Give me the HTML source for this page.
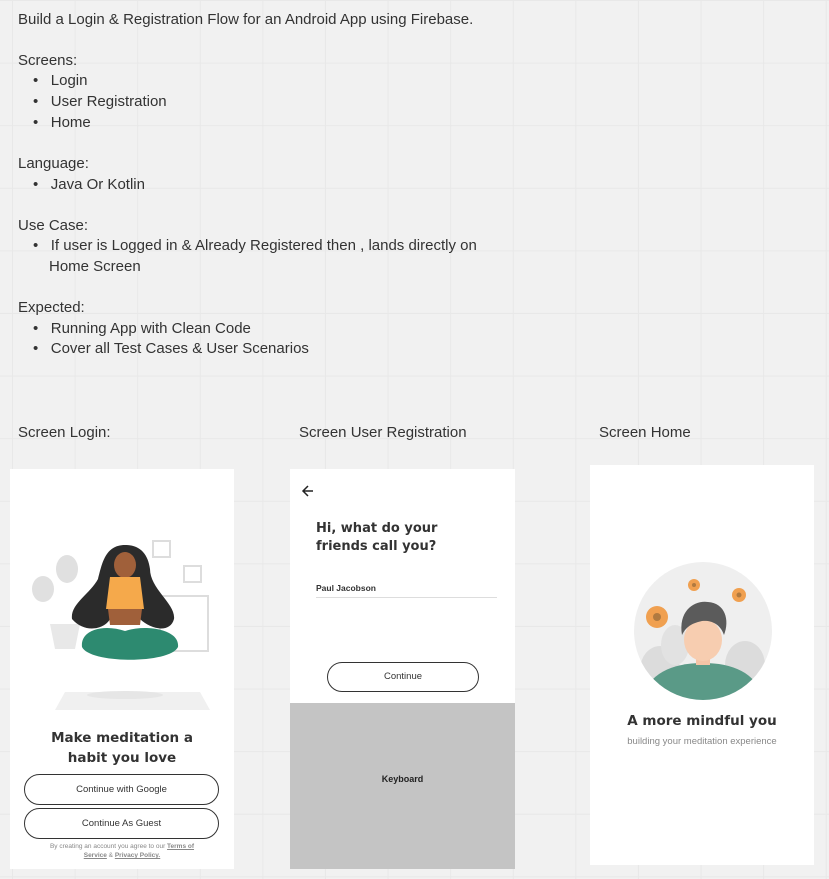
<!DOCTYPE html>
<html><head><meta charset="utf-8"><style>
*{margin:0;padding:0;box-sizing:border-box}
body{width:829px;height:879px;overflow:hidden;position:relative;font-family:"Liberation Sans",sans-serif;color:#333;
background-color:#f1f1f1;
background-image:linear-gradient(to right,#e8e8e8 1px,transparent 1px),linear-gradient(to bottom,#e8e8e8 1px,transparent 1px);
background-size:62.6px 62.6px;background-position:12px 0px;}
.t{position:absolute;font-size:15px;color:#333;white-space:nowrap;line-height:18px}
.card{position:absolute;background:#fff}
.btn{position:absolute;border:1px solid #333;border-radius:16px;font-size:9.5px;text-align:center;background:#fff;color:#333}
.h{position:absolute;font-weight:bold;color:#333;text-align:center}
</style></head><body>
<div class="t" style="left:18px;top:11px">Build a Login &amp; Registration Flow for an Android App using Firebase.</div>
<div class="t" style="left:18px;top:52px">Screens:</div>
<div class="t" style="left:33px;top:72px">•&nbsp;&nbsp;&nbsp;Login</div>
<div class="t" style="left:33px;top:93px">•&nbsp;&nbsp;&nbsp;User Registration</div>
<div class="t" style="left:33px;top:114px">•&nbsp;&nbsp;&nbsp;Home</div>
<div class="t" style="left:18px;top:155px">Language:</div>
<div class="t" style="left:33px;top:176px">•&nbsp;&nbsp;&nbsp;Java Or Kotlin</div>
<div class="t" style="left:18px;top:217px">Use Case:</div>
<div class="t" style="left:33px;top:237px">•&nbsp;&nbsp;&nbsp;If user is Logged in &amp; Already Registered then , lands directly on</div>
<div class="t" style="left:49px;top:258px">Home Screen</div>
<div class="t" style="left:18px;top:299px">Expected:</div>
<div class="t" style="left:33px;top:320px">•&nbsp;&nbsp;&nbsp;Running App with Clean Code</div>
<div class="t" style="left:33px;top:340px">•&nbsp;&nbsp;&nbsp;Cover all Test Cases &amp; User Scenarios</div>
<div class="t" style="left:18px;top:424px">Screen Login:</div>
<div class="t" style="left:299px;top:424px">Screen User Registration</div>
<div class="t" style="left:599px;top:424px">Screen Home</div>

<div class="card" style="left:10px;top:469px;width:224px;height:400px">
<svg width="224" height="260" style="position:absolute;left:0;top:0">
 <g fill="#e0e0e0">
  <ellipse cx="33" cy="120" rx="11" ry="13"/><ellipse cx="57" cy="100" rx="11" ry="14"/>
  <rect x="143" y="72" width="17" height="16" fill="none" stroke="#ddd" stroke-width="2"/>
  <rect x="174" y="97" width="17" height="16" fill="none" stroke="#ddd" stroke-width="2"/>
  <rect x="150" y="127" width="48" height="55" fill="none" stroke="#ddd" stroke-width="2"/>
  <path d="M40 155 h30 l-5 25 h-20z" fill="#e8e8e8"/>
  <path d="M45 241 L55 223 H190 L200 241Z" fill="#f0f0f0"/>
  <ellipse cx="115" cy="226" rx="38" ry="4" fill="#e6e6e6"/>
 </g>
 <path d="M115 76 C95 76 92 95 88 110 C80 125 60 135 62 150 C75 165 95 160 100 150 L130 150 C140 160 160 165 164 150 C166 135 140 120 140 100 C138 85 130 76 115 76Z" fill="#2b2b2b"/>
 <ellipse cx="115" cy="96" rx="11" ry="13" fill="#a0603a"/>
 <path d="M100 108 H130 L134 140 H96Z" fill="#f5a94b"/>
 <path d="M98 140 H132 L130 156 H100Z" fill="#a0603a"/>
 <path d="M72 178 C70 160 95 155 115 162 C135 155 170 160 168 178 C160 195 80 195 72 178Z" fill="#2d8a70"/>
</svg>
<div class="h" style="left:0;width:224px;top:259px;font-size:13.5px;line-height:20px;font-family:'DejaVu Sans',sans-serif">Make meditation a<br>habit you love</div>
<div class="btn" style="left:14px;top:305px;width:195px;height:31px;line-height:29px">Continue with Google</div>
<div class="btn" style="left:14px;top:339px;width:195px;height:31px;line-height:29px">Continue As Guest</div>
<div style="position:absolute;left:0;width:224px;top:373px;font-size:6.5px;line-height:9px;text-align:center;color:#888">By creating an account you agree to our <u><b>Terms of</b></u><br><u><b>Service</b></u> &amp; <u><b>Privacy Policy.</b></u></div>
</div>

<div class="card" style="left:290px;top:469px;width:225px;height:400px">
<svg width="20" height="20" style="position:absolute;left:9px;top:12px"><path d="M14 10H4M9 5L4 10L9 15" stroke="#222" stroke-width="1.5" fill="none"/></svg>
<div class="h" style="left:26px;top:51px;font-size:13px;line-height:18px;text-align:left;font-family:'DejaVu Sans',sans-serif">Hi, what do your<br>friends call you?</div>
<div style="position:absolute;left:26px;top:114px;font-size:8.5px;font-weight:bold;color:#333">Paul Jacobson</div>
<div style="position:absolute;left:26px;top:128px;width:181px;height:1px;background:#ddd"></div>
<div class="btn" style="left:37px;top:193px;width:152px;height:30px;line-height:28px">Continue</div>
<div style="position:absolute;left:0;top:234px;width:225px;height:166px;background:#c4c4c4;text-align:center;line-height:152px;font-size:9px;font-weight:bold;color:#222">Keyboard</div>
</div>

<div class="card" style="left:590px;top:465px;width:224px;height:400px">
<svg width="224" height="240" style="position:absolute;left:0;top:0">
 <defs><clipPath id="c"><circle cx="113" cy="166" r="69"/></clipPath></defs>
 <circle cx="113" cy="166" r="69" fill="#efefef"/>
 <g clip-path="url(#c)">
  <ellipse cx="70" cy="205" rx="20" ry="24" fill="#dcdcdc"/>
  <ellipse cx="155" cy="200" rx="20" ry="24" fill="#dcdcdc"/>
  <ellipse cx="85" cy="180" rx="14" ry="20" fill="#e2e2e2"/>
  <path d="M50 240 C55 210 80 198 113 198 C146 198 170 210 175 240Z" fill="#5a9a87"/>
 </g>
 <rect x="106" y="185" width="14" height="15" fill="#f5c4a6"/>
 <ellipse cx="113" cy="175" rx="19" ry="21" fill="#f7cdb0"/>
 <path d="M92 170 C88 145 105 135 118 137 C135 138 140 155 134 170 C130 158 120 155 112 156 C104 158 97 160 92 170Z" fill="#5b5b5b"/>
 <g fill="#f0a050"><circle cx="67" cy="152" r="11"/><circle cx="104" cy="120" r="6"/><circle cx="149" cy="130" r="7"/></g>
 <g fill="#b07a40"><circle cx="67" cy="152" r="4"/><circle cx="104" cy="120" r="2"/><circle cx="149" cy="130" r="2.5"/></g>
</svg>
<div class="h" style="left:0;width:224px;top:248px;font-size:13.5px;font-family:'DejaVu Sans',sans-serif">A more mindful you</div>
<div style="position:absolute;left:0;width:224px;top:271px;font-size:9.5px;text-align:center;color:#888">building your meditation experience</div>
</div>
</body></html>
